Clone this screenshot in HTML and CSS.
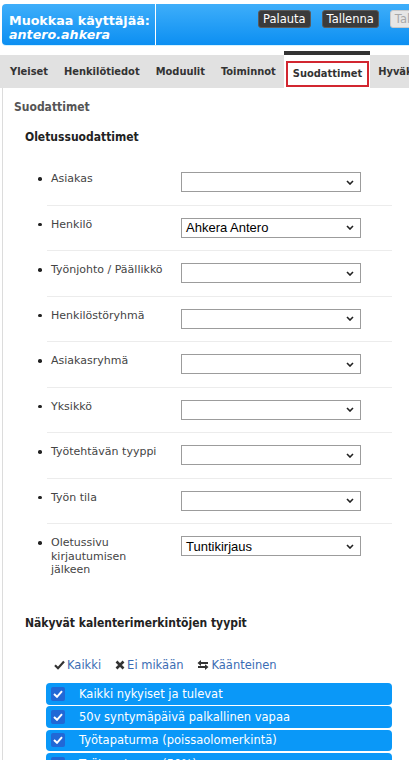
FILE: index.html
```html
<!DOCTYPE html>
<html lang="fi">
<head>
<meta charset="utf-8">
<title>Muokkaa käyttäjää</title>
<link rel="stylesheet" href="styles.css">
</head>
<body>
<div class="header">
  <div class="title">
    <div class="title-main">Muokkaa käyttäjää:</div>
    <div class="title-sub">antero.ahkera</div>
  </div>
  <div class="actions">
    <span class="btn btn-dark">Palauta</span>
    <span class="btn btn-dark">Tallenna</span>
    <span class="btn btn-light">Tallenna ja sulje</span>
  </div>
</div>

<div class="tabbar">
  <div class="tab">Yleiset</div>
  <div class="tab">Henkilötiedot</div>
  <div class="tab">Moduulit</div>
  <div class="tab">Toiminnot</div>
  <div class="tab tab-active"><span class="tab-focus">Suodattimet</span></div>
  <div class="tab">Hyväksynnät</div>
</div>

<div class="content">
  <div class="crumb">Suodattimet</div>
  <h2 class="section-title">Oletussuodattimet</h2>
  <ul class="filters">
    <li class="filter"><span class="bullet"></span><span class="label">Asiakas</span><div class="select"><span class="value"></span><svg class="chev" width="8" height="5" viewBox="0 0 8 5"><path d="M1 1 L4 4 L7 1" fill="none" stroke="#222" stroke-width="1.6"/></svg></div></li>
    <li class="filter"><span class="bullet"></span><span class="label">Henkilö</span><div class="select"><span class="value">Ahkera Antero</span><svg class="chev" width="8" height="5" viewBox="0 0 8 5"><path d="M1 1 L4 4 L7 1" fill="none" stroke="#222" stroke-width="1.6"/></svg></div></li>
    <li class="filter"><span class="bullet"></span><span class="label">Työnjohto / Päällikkö</span><div class="select"><span class="value"></span><svg class="chev" width="8" height="5" viewBox="0 0 8 5"><path d="M1 1 L4 4 L7 1" fill="none" stroke="#222" stroke-width="1.6"/></svg></div></li>
    <li class="filter"><span class="bullet"></span><span class="label">Henkilöstöryhmä</span><div class="select"><span class="value"></span><svg class="chev" width="8" height="5" viewBox="0 0 8 5"><path d="M1 1 L4 4 L7 1" fill="none" stroke="#222" stroke-width="1.6"/></svg></div></li>
    <li class="filter"><span class="bullet"></span><span class="label">Asiakasryhmä</span><div class="select"><span class="value"></span><svg class="chev" width="8" height="5" viewBox="0 0 8 5"><path d="M1 1 L4 4 L7 1" fill="none" stroke="#222" stroke-width="1.6"/></svg></div></li>
    <li class="filter"><span class="bullet"></span><span class="label">Yksikkö</span><div class="select"><span class="value"></span><svg class="chev" width="8" height="5" viewBox="0 0 8 5"><path d="M1 1 L4 4 L7 1" fill="none" stroke="#222" stroke-width="1.6"/></svg></div></li>
    <li class="filter"><span class="bullet"></span><span class="label">Työtehtävän tyyppi</span><div class="select"><span class="value"></span><svg class="chev" width="8" height="5" viewBox="0 0 8 5"><path d="M1 1 L4 4 L7 1" fill="none" stroke="#222" stroke-width="1.6"/></svg></div></li>
    <li class="filter"><span class="bullet"></span><span class="label">Työn tila</span><div class="select"><span class="value"></span><svg class="chev" width="8" height="5" viewBox="0 0 8 5"><path d="M1 1 L4 4 L7 1" fill="none" stroke="#222" stroke-width="1.6"/></svg></div></li>
    <li class="filter filter-last"><span class="bullet"></span><span class="label">Oletussivu kirjautumisen jälkeen</span><div class="select"><span class="value">Tuntikirjaus</span><svg class="chev" width="8" height="5" viewBox="0 0 8 5"><path d="M1 1 L4 4 L7 1" fill="none" stroke="#222" stroke-width="1.6"/></svg></div></li>
  </ul>

  <h2 class="section-title section-title-2">Näkyvät kalenterimerkintöjen tyypit</h2>
  <div class="links">
    <span class="link"><svg class="ico-svg" width="11" height="10" viewBox="0 0 11 10"><path d="M1 5.2 L4 8.2 L10 1.5" fill="none" stroke="#333" stroke-width="2.2"/></svg>Kaikki</span>
    <span class="link"><svg class="ico-svg" width="10" height="10" viewBox="0 0 10 10"><path d="M1.5 1.5 L8.5 8.5 M8.5 1.5 L1.5 8.5" fill="none" stroke="#333" stroke-width="2.6"/></svg>Ei mikään</span>
    <span class="link"><svg class="ico-svg" width="12" height="10" viewBox="0 0 12 10"><path d="M0.5 3 L4 0 L4 2 L11 2 L11 4 L4 4 L4 6 Z" fill="#333"/><path d="M11.5 7 L8 4.2 L8 6 L1 6 L1 8 L8 8 L8 10 Z" fill="#333"/></svg>Käänteinen</span>
  </div>
  <ul class="types">
    <li class="type"><span class="cb"><svg width="10" height="8" viewBox="0 0 10 8"><path d="M1 4 L4 6.8 L9 1.2" fill="none" stroke="#fff" stroke-width="2"/></svg></span><span class="type-text">Kaikki nykyiset ja tulevat</span></li>
    <li class="type"><span class="cb"><svg width="10" height="8" viewBox="0 0 10 8"><path d="M1 4 L4 6.8 L9 1.2" fill="none" stroke="#fff" stroke-width="2"/></svg></span><span class="type-text">50v syntymäpäivä palkallinen vapaa</span></li>
    <li class="type"><span class="cb"><svg width="10" height="8" viewBox="0 0 10 8"><path d="M1 4 L4 6.8 L9 1.2" fill="none" stroke="#fff" stroke-width="2"/></svg></span><span class="type-text">Työtapaturma (poissaolomerkintä)</span></li>
    <li class="type"><span class="cb"><svg width="10" height="8" viewBox="0 0 10 8"><path d="M1 4 L4 6.8 L9 1.2" fill="none" stroke="#fff" stroke-width="2"/></svg></span><span class="type-text">Työtapaturma (50%)</span></li>
  </ul>
</div>
</body>
</html>
```

FILE: styles.css
```css
* { box-sizing: border-box; }
html, body { margin: 0; padding: 0; background: #fff; }
body {
  font-family: "DejaVu Sans", Verdana, sans-serif;
  font-size: 11px;
  color: #333;
  width: 409px;
  overflow: hidden;
}

/* Header */
.header {
  display: flex;
  height: 41px;
  margin: 4px 0 0 2px;
  background: linear-gradient(#3eaefa, #0c8ff2);
  box-shadow: 0 1px 0 #d3f2ff;
  border-radius: 4px 0 0 4px;
}
.title {
  width: 154px;
  flex: none;
  padding: 10px 0 0 7px;
  border-right: 1px solid #fff;
  color: #fff;
  font-weight: bold;
  font-size: 12.7px;
  line-height: 13.5px;
  white-space: nowrap;
  overflow: hidden;
}
.title-sub { font-style: italic; }
.actions {
  display: flex;
  gap: 11px;
  padding: 6px 0 0 102px;
  overflow: hidden;
  white-space: nowrap;
  align-items: flex-start;
}
.btn {
  flex: none;
  height: 18px;
  line-height: 16px;
  padding: 0 4px;
  border-radius: 3px;
  font-size: 11.5px;
}
.btn-dark {
  background: #3b3b3b;
  border: 1px solid #5a5a5a;
  color: #fff;
}
.btn-light {
  background: #e6e6e6;
  border: 1px solid #c8c8c8;
  color: #a8a8a8;
}

/* Tabs */
.tabbar {
  display: flex;
  margin-top: 6px;
  padding-left: 2px;
  height: 37px;
  background: linear-gradient(#fff 0, #fff 4px, #e1e1e1 4px);
  white-space: nowrap;
  overflow: hidden;
}
.tab {
  flex: none;
  margin-top: 4px;
  height: 33px;
  line-height: 33px;
  padding: 0 8px;
  font-family: "DejaVu Sans Condensed", "DejaVu Sans", sans-serif;
  font-weight: bold;
  font-size: 11px;
  color: #333;
}
.tab-active {
  margin-top: 0;
  height: 37px;
  border-top: 4px solid #333;
  background: #fff;
  padding: 6px 1px 1px 2px;
  line-height: normal;
}
.tab-focus {
  display: block;
  height: 26px;
  line-height: 22px;
  padding: 0 5px;
  border: 2px solid #d22630;
}

/* Content */
.content {
  margin-left: 2px;
  border-left: 1px solid #dcdcdc;
  padding: 12px 0 40px 11px;
  min-height: 700px;
}
.crumb {
  font-family: "DejaVu Sans Condensed", "DejaVu Sans", sans-serif;
  font-weight: bold;
  font-size: 12px;
  line-height: 14px;
  color: #555;
}
.section-title {
  margin: 15px 0 0 11px;
  font-family: "DejaVu Sans Condensed", "DejaVu Sans", sans-serif;
  font-weight: bold;
  font-size: 12px;
  line-height: 16px;
  color: #222;
}
.section-title-2 { margin-top: 26px; }

.filters {
  list-style: none;
  margin: 15px 0 0 33px;
  padding: 0;
  width: 345px;
}
.filter {
  display: flex;
  align-items: flex-start;
  padding: 12px 0 12.5px 5px;
  border-bottom: 1px solid #ececec;
}
.filter-last { border-bottom: none; }
.bullet {
  flex: none;
  width: 3.5px;
  height: 3.5px;
  margin: 5px 9.5px 0 -14px;
  border-radius: 50%;
  background: #222;
}
.label {
  flex: none;
  width: 130px;
  line-height: 13.5px;
  color: #444;
  padding-right: 14px;
}
.select {
  flex: none;
  width: 180px;
  height: 20px;
  border: 1px solid #9c9c9c;
  background: #fff;
  display: flex;
  align-items: center;
  justify-content: space-between;
  padding: 0 6px 0 4px;
}
.value {
  font-family: "Liberation Sans", Arial, sans-serif;
  font-size: 13px;
  color: #000;
}
.chev { flex: none; display: block; }

.links {
  display: flex;
  gap: 14px;
  margin: 26px 0 0 40px;
  line-height: 16px;
  font-size: 11.5px;
  color: #3b6db4;
}
.link { display: flex; align-items: center; }
.ico-svg { flex: none; margin-right: 2px; }

.types {
  list-style: none;
  margin: 10px 0 0 32px;
  padding: 0;
  width: 346px;
  display: flex;
  flex-direction: column;
  gap: 1.6px;
}
.type {
  height: 21.7px;
  display: flex;
  align-items: center;
  padding-left: 5px;
  background: #0a98f8;
  border-radius: 4px;
  color: #fff;
}
.cb {
  flex: none;
  width: 14px;
  height: 14px;
  border-radius: 2px;
  background: #2168d6;
  display: flex;
  align-items: center;
  justify-content: center;
  margin-right: 14px;
}
.type-text { font-size: 11.5px; }
```
